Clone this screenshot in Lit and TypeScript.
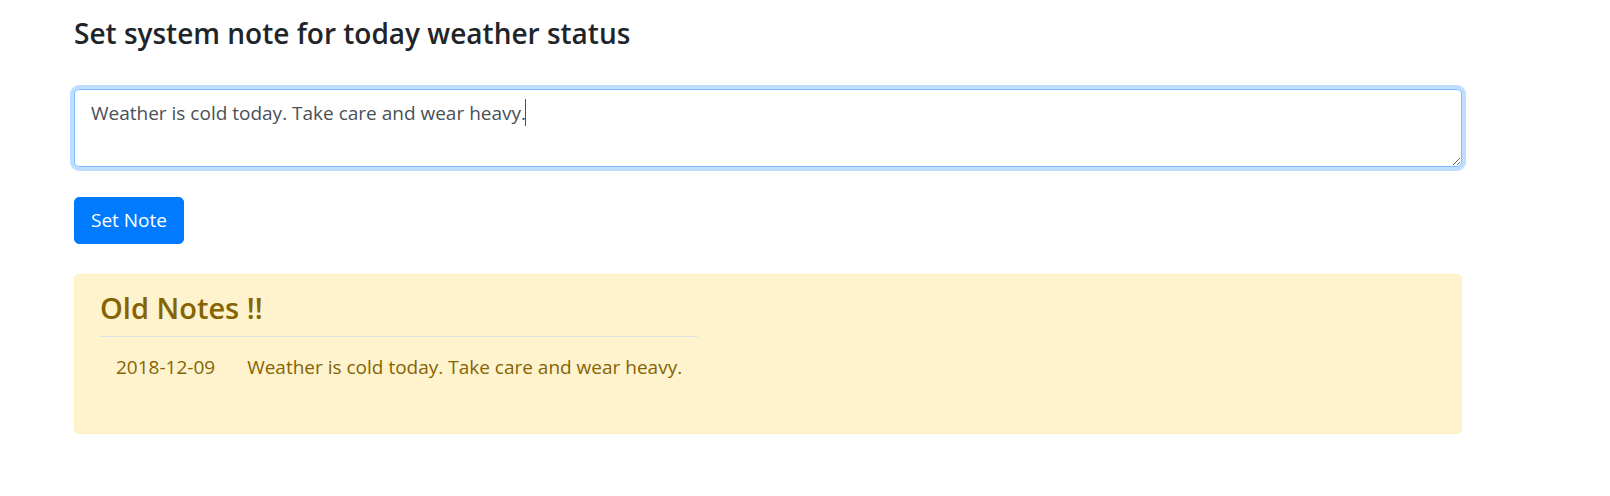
import { LitElement, html, css } from "lit";
import { customElement, property, state, query } from "lit/decorators.js";
import { styleMap } from "lit/directives/style-map.js";

interface Note {
  date: string;
  text: string;
}

@customElement("old-notes")
export class OldNotes extends LitElement {
  @property({ attribute: false }) notes: Note[] = [];

  static styles = css`
    :host {
      display: block;
      box-sizing: border-box;
      padding: 15px 25px 35px;
      border: 1px solid #ffeeba;
      border-radius: 5px;
      background: #fff3cd;
      color: #856404;
    }
    .title {
      margin: 0 0 10px;
      font-size: 29px;
      line-height: 36px;
      font-weight: 600;
    }
    .table {
      border-collapse: collapse;
    }
    .cell {
      padding: 16px;
      border-top: 1px solid #dee2e6;
    }
  `;

  render() {
    return html`
      <h2 class="title" id="title">Old Notes !!</h2>
      <table class="table" aria-labelledby="title">
        <tbody>
          ${this.notes.map(
            (note) => html`<tr>
              <td class="cell">${note.date}</td>
              <td class="cell">${note.text}</td>
            </tr>`
          )}
        </tbody>
      </table>
    `;
  }
}

@customElement("app-root")
export class AppRoot extends LitElement {
  @state() private draft = "Weather is cold today. Take care and wear heavy.";
  @state() private notes: Note[] = [
    { date: "2018-12-09", text: "Weather is cold today. Take care and wear heavy." },
  ];
  @state() private caret = { x: 0, line: 0 };
  @query(".note") private field!: HTMLTextAreaElement;

  static styles = css`
    :host {
      display: block;
      box-sizing: border-box;
      padding: 15px 148px 30px 74px;
      background: #fff;
      color: #212529;
      font-family: "Segoe UI", "Open Sans", "Noto Sans", sans-serif;
      font-size: 19px;
      line-height: 29px;
    }
    .form {
      display: flex;
      flex-direction: column;
      align-items: flex-start;
      gap: 30px;
      margin-bottom: 30px;
    }
    .heading {
      margin: 0 0 8px;
      font-size: 28px;
      line-height: 36px;
      font-weight: 600;
    }
    .editor {
      position: relative;
      width: 100%;
    }
    .note {
      display: block;
      box-sizing: border-box;
      width: 100%;
      height: 78px;
      margin: 0;
      padding: 9px 16px;
      border: 1px solid #ced4da;
      border-radius: 5px;
      background: #fff;
      color: #495057;
      caret-color: transparent;
      font: inherit;
      resize: vertical;
      overflow: auto;
    }
    .note:focus {
      outline: 0;
      border-color: #80bdff;
      box-shadow: 0 0 0 4px rgba(0, 123, 255, 0.25);
    }
    .caret {
      position: absolute;
      top: 10px;
      left: 16px;
      width: 1px;
      height: 27px;
      background: #495057;
      pointer-events: none;
      visibility: hidden;
    }
    .note:focus + .caret {
      visibility: visible;
    }
    .submit {
      padding: 8px 16px;
      border: 1px solid #007bff;
      border-radius: 5px;
      background: #007bff;
      color: #fff;
      font: inherit;
      cursor: pointer;
    }
  `;

  firstUpdated() {
    this.field.focus();
    this.field.setSelectionRange(this.draft.length, this.draft.length);
    this.placeCaret();
  }

  private placeCaret() {
    const lines = this.field.value.slice(0, this.field.selectionEnd).split("\n");
    const context = document.createElement("canvas").getContext("2d")!;
    const style = getComputedStyle(this.field);
    context.font = `${style.fontSize} ${style.fontFamily}`;
    const x = Math.round(context.measureText(lines[lines.length - 1]).width);
    this.caret = { x, line: lines.length - 1 };
  }

  private onInput() {
    this.draft = this.field.value;
    this.placeCaret();
  }

  private onSubmit(e: Event) {
    e.preventDefault();
    const date = new Date().toISOString().slice(0, 10);
    this.notes = [...this.notes, { date, text: this.draft }];
  }

  render() {
    const caretStyle = {
      transform: `translate(${this.caret.x}px, ${this.caret.line * 29}px)`,
    };
    return html`
      <form class="form" @submit=${this.onSubmit}>
        <h1 class="heading"><label for="note">Set system note for today weather status</label></h1>
        <div class="editor">
          <textarea
            class="note"
            id="note"
            rows="2"
            .value=${this.draft}
            @input=${this.onInput}
            @keyup=${this.placeCaret}
            @click=${this.placeCaret}
          ></textarea>
          <span class="caret" style=${styleMap(caretStyle)}></span>
        </div>
        <button class="submit" type="submit">Set Note</button>
      </form>
      <old-notes .notes=${this.notes}></old-notes>
    `;
  }
}
